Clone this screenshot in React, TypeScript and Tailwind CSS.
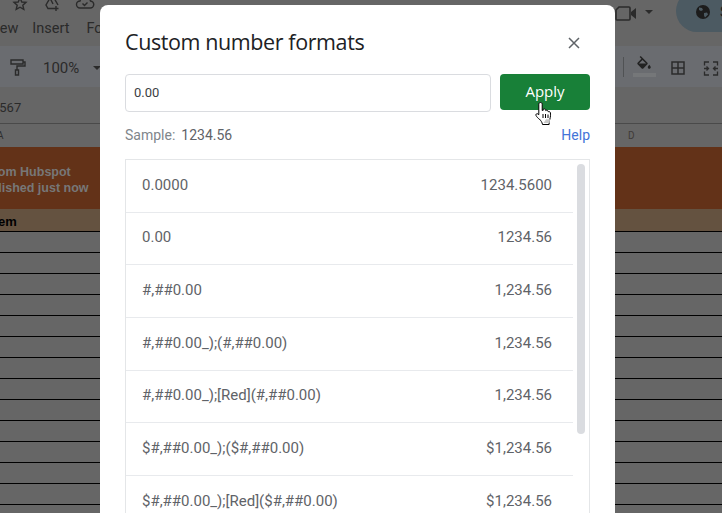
const formats = [
  ['0.0000', '1234.5600'],
  ['0.00', '1234.56'],
  ['#,##0.00', '1,234.56'],
  ['#,##0.00_);(#,##0.00)', '1,234.56'],
  ['#,##0.00_);[Red](#,##0.00)', '1,234.56'],
  ['$#,##0.00_);($#,##0.00)', '$1,234.56'],
  ['$#,##0.00_);[Red]($#,##0.00)', '$1,234.56'],
];

function Backdrop() {
  return (
    <div className="absolute inset-0 flex flex-col overflow-hidden bg-[#666666] font-['Roboto',sans-serif] text-[#2a2a2a]">
      {/* menu bar */}
      <div className="h-[46px] shrink-0 relative">
        <svg className="absolute left-[12px] top-[-4px]" width="16" height="16" viewBox="0 0 16 16" fill="none" stroke="#2b2b2b" strokeWidth="1.4">
          <path d="M8 2l1.800 4 4.200.4-3.200 2.800 1 4.200L8 11.200 4.200 13.400l1-4.200L2 6.400 6.200 6z" />
        </svg>
        <svg className="absolute left-[44px] top-[-4px]" width="18" height="16" viewBox="0 0 18 16" fill="none" stroke="#2b2b2b" strokeWidth="1.4">
          <path d="M6 2h4l4 7M6 2L2 9l2 3.500h6M6 2l3 6M12 10v5M9.500 12.500h5" />
        </svg>
        <svg className="absolute left-[75px] top-[-5px]" width="20" height="16" viewBox="0 0 20 16" fill="none" stroke="#2b2b2b" strokeWidth="1.4">
          <path d="M5 13h10a3.500 3.500 0 0 0 .5-7A5.500 5.500 0 0 0 5 6a3.500 3.500 0 0 0 0 7zM7.500 8.500l2 2 3-3" />
        </svg>
        <div className="absolute left-0 top-[20px] text-[14.500px] leading-[18px] whitespace-nowrap w-[100px] overflow-hidden">
          <span className="ml-[-13px]">View</span>
          <span className="ml-[14px]">Insert</span>
          <span className="ml-[17px]">Format</span>
        </div>
        <svg className="absolute left-[614px] top-[4px]" width="24" height="18" viewBox="0 0 24 18" fill="none" stroke="#2b2b2b" strokeWidth="1.6">
          <path d="M5 3h10a1 1 0 0 1 1 1v11a1 1 0 0 1-1 1H3a1 1 0 0 1-1-1V6z" />
          <path d="M17 8l5-4v11l-5-4z" fill="#2b2b2b" stroke="none" />
        </svg>
        <div className="absolute left-[645px] top-[10px] w-0 h-0 border-x-[4px] border-x-transparent border-t-[4px] border-t-[#2b2b2b]" />
        <div className="absolute left-[676px] top-[-10px] w-[80px] h-[42px] rounded-full bg-[#4c5a62] flex items-center pl-[19px] pt-[2px] gap-[9px] text-[14px] text-[#1c1c1c]">
          <svg width="16" height="16" viewBox="0 0 16 16" className="shrink-0">
            <circle cx="8" cy="8" r="7" fill="#1c1c1c" />
            <path d="M4 3.500l3 .5 1 2-2 1-2-1zM9 9l3-.500 1 2-3 3-1-2z" fill="#4c5a62" />
          </svg>
          <span>Share</span>
        </div>
      </div>
      {/* toolbar */}
      <div className="h-[41px] shrink-0 bg-[#6a6c70] relative">
        <svg className="absolute left-[9px] top-[13px]" width="18" height="18" viewBox="0 0 18 18" fill="none" stroke="#2b2b2b" strokeWidth="1.4">
          <path d="M2 1h12v4H2zM14 3h2v4H8v4M6.500 11h3v5h-3z" />
        </svg>
        <span className="absolute left-[43px] top-[12px] text-[15px] leading-[20px]">100%</span>
        <div className="absolute left-[93px] top-[20px] w-0 h-0 border-x-[4px] border-x-transparent border-t-[4px] border-t-[#2b2b2b]" />
        <div className="absolute left-[623px] top-[11px] w-px h-[20px] bg-[#505254]" />
        <svg className="absolute left-[635px] top-[10px]" width="18" height="18" viewBox="0 0 24 24" fill="#222222">
          <path d="M16.560 8.940L7.620 0 6.210 1.410l2.380 2.380-5.150 5.150c-.59.59-.59 1.540 0 2.120l5.500 5.500c.29.29.68.44 1.060.44s.77-.15 1.060-.44l5.500-5.500c.59-.58.59-1.530 0-2.120zM5.210 10L10 5.210 14.790 10H5.210zM19 11.500s-2 2.170-2 3.500c0 1.100.9 2 2 2s2-.9 2-2c0-1.330-2-3.500-2-3.500z" />
        </svg>
        <div className="absolute left-[633px] top-[27px] w-[23px] h-[4px] bg-[#757779]" />
        <svg className="absolute left-[670px] top-[14px]" width="16" height="16" viewBox="0 0 16 16" fill="none" stroke="#2b2b2b" strokeWidth="1.500">
          <path d="M2 2h12v12H2zM8 2v12M2 8h12" />
        </svg>
        <svg className="absolute left-[703px] top-[15px]" width="16" height="15" viewBox="0 0 16 15" fill="none" stroke="#2b2b2b" strokeWidth="1.300">
          <path d="M6 1H1.500v3.500M1.500 10.500V14H6M10 1h4.500v3.500M14.500 10.500V14H10M1 7.500h4M3.500 5.500l2 2-2 2M15 7.500h-4M12.500 5.500l-2 2 2 2" />
        </svg>
      </div>
      {/* formula bar */}
      <div className="h-[37px] shrink-0 text-[13px] border-b border-[#4a4a4a] flex items-center">
        <span className="ml-[-8px] mt-[6px]">4567</span>
      </div>
      {/* column headers */}
      <div className="h-[23px] shrink-0 relative text-[10px] text-[#2e2e2e]">
        <span className="absolute left-[-3px] top-[4px]">A</span>
        <span className="absolute left-[628px] top-[4px] text-[#3f3a36]">D</span>
      </div>
      {/* banner */}
      <div className="h-[62px] shrink-0 bg-[#633218] pt-[17px] font-['Liberation_Sans',sans-serif] font-bold text-[12.500px] leading-[16px] text-[#777777] whitespace-nowrap">
        <div className="ml-[-7px]">rom Hubspot</div>
        <div className="ml-[-17px]">ublished just now</div>
      </div>
      <div className="h-[23px] shrink-0 bg-[#645240] border-b border-black pt-[3px] font-['Liberation_Sans',sans-serif] font-bold text-[13px] leading-[19px] text-black">
        <span className="ml-[-10px]">Item</span>
      </div>
      {Array.from({ length: 13 }, (_, i) => (
        <div key={i} className="h-[21px] shrink-0 border-b border-black" />
      ))}
    </div>
  );
}

function HandCursor() {
  return (
    <svg className="absolute left-[535px] top-[101px]" width="19" height="26" viewBox="0 0 19 26">
      <path
        d="M5.500 1.500c1 0 1.700.7 1.700 1.700v6.300l1-.2V8.200c1-.7 2-.3 2.300.6l.2.800c.9-.7 2-.4 2.300.6l.2.600c.9-.5 2-.1 2.200.9.300 1.600.100 4.500-.5 6.300-.5 1.600-.8 3-.8 5.500H7.500c-.4-2.400-1.500-3.700-3.200-5.500C3 17.400 1.500 15.500 1 14.500c-.5-1.200.7-2.300 1.800-1.600l1 .8V3.200c0-1 .7-1.700 1.700-1.700z"
        fill="#ffffff"
        stroke="#000000"
        strokeWidth="1"
        strokeLinejoin="round"
      />
      <path d="M8 13v4M10.500 13v4M13 13.500v3.500" stroke="#000000" strokeWidth="1" fill="none" />
      <path d="M8.500 22h6c.1-1.500.4-2.600.8-3.800H11z" fill="#c8c8c8" />
    </svg>
  );
}

export default function App() {
  return (
    <div className="relative w-[722px] h-[513px] overflow-hidden bg-[#666666]">
      <Backdrop />

      {/* dialog */}
      <div className="absolute left-[100px] top-[5px] w-[515px] h-[560px] bg-white rounded-[8px] pl-[25px] pr-[25px] font-['Roboto',sans-serif]">
        <div className="flex items-center justify-between h-[69px] pt-[4px]">
          <h2 className="text-[21.500px] leading-[28px] text-[#202124] font-['Open_Sans',sans-serif] tracking-[-0.4px]">Custom number formats</h2>
          <svg className="mr-[10px] mt-[2px]" width="12" height="12" viewBox="0 0 12 12" stroke="#5f6368" strokeWidth="1.500">
            <path d="M1 1l10 10M11 1L1 11" />
          </svg>
        </div>

        <div className="flex items-start gap-[9px]">
          <div className="w-[366px] h-[38px] border border-[#dadce0] rounded-[4px] pl-[8px] flex items-center text-[13px] text-[#3c4043]">0.00</div>
          <button className="w-[90px] h-[36px] rounded-[4px] bg-[#188038] text-white text-[15px] pb-[2px] font-['Open_Sans',sans-serif]">Apply</button>
        </div>

        <div className="flex items-center justify-between h-[24px] mt-[11px] text-[14px]">
          <div className="text-[#5f6368]">
            <span className="text-[#80868b]">Sample:</span>
            <span className="ml-[6px]">1234.56</span>
          </div>
          <span className="text-[#4374d8]">Help</span>
        </div>

        <div className="relative mt-[12px] w-[465px] h-[400px] border border-[#e4e6e8] text-[15px] text-[#5f6368]">
          {formats.map(([pattern, sample]) => (
            <div key={pattern} className="w-[447px] h-[52.700px] border-b border-[#e8eaed] flex items-center justify-between pl-[16px] pr-[21px] pb-[2px]">
              <span>{pattern}</span>
              <span>{sample}</span>
            </div>
          ))}
          <div className="absolute left-[451px] top-[4px] w-[8px] h-[270px] rounded-full bg-[#dadce0]" />
        </div>
      </div>

      <HandCursor />
    </div>
  );
}
